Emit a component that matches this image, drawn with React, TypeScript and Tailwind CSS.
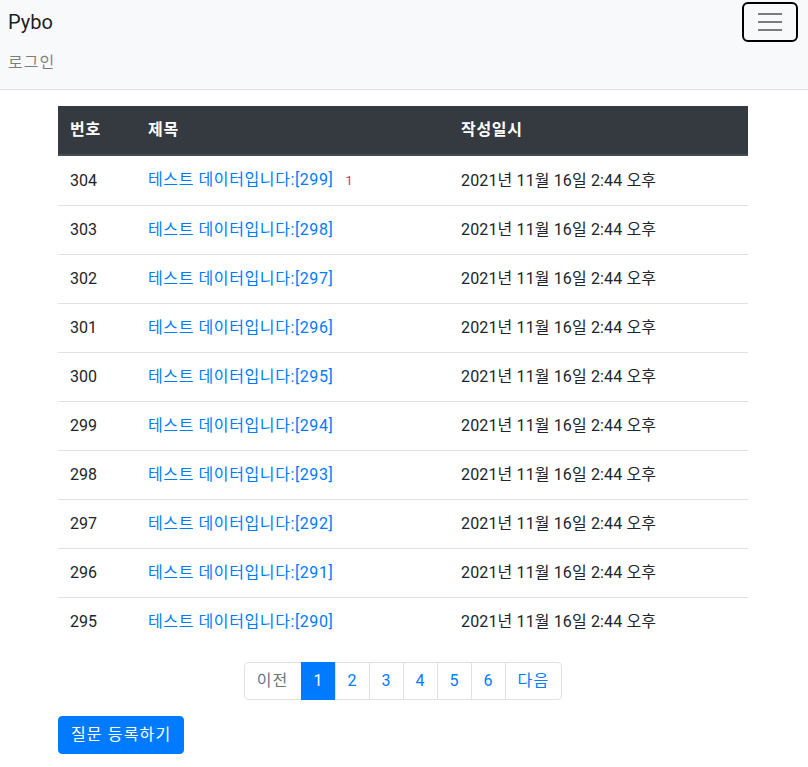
import React from "react";

const rows = [304, 303, 302, 301, 300, 299, 298, 297, 296, 295];

export default function App() {
  return (
    <div
      className="min-h-[767px] bg-white text-[#212529] text-[16px] leading-[24px]"
      style={{ fontFamily: 'Roboto, "Noto Sans CJK KR", sans-serif' }}
    >
      <nav className="h-[90px] bg-[#f8f9fa] border-b border-[#dee2e6] pl-[8px] pr-[10px] pt-[2px]">
        <div className="flex items-center justify-between h-[40px]">
          <span className="text-[20px] leading-[30px] text-[rgba(0,0,0,0.9)]">Pybo</span>
          <button className="w-[56px] h-[40px] border-2 border-black rounded-[6px] flex flex-col items-center justify-center gap-[6px]">
            <span className="block w-[24px] h-[2px] bg-[rgba(0,0,0,0.5)]"></span>
            <span className="block w-[24px] h-[2px] bg-[rgba(0,0,0,0.5)]"></span>
            <span className="block w-[24px] h-[2px] bg-[rgba(0,0,0,0.5)]"></span>
          </button>
        </div>
        <div className="mt-[3px] py-[6px] text-[rgba(0,0,0,0.5)] tracking-[1px]">로그인</div>
      </nav>
      <div className="w-[690px] ml-[58px] pt-[16px]">
        <table className="w-full border-collapse table-fixed">
          <colgroup>
            <col className="w-[78px]" />
            <col className="w-[313px]" />
            <col />
          </colgroup>
          <thead>
            <tr className="bg-[#343a40] text-white">
              <th className="text-left font-bold px-[12px] py-[12px] border-b-2 border-[#454d55] tracking-[0.7px]">번호</th>
              <th className="text-left font-bold px-[12px] py-[12px] border-b-2 border-[#454d55] tracking-[0.7px]">제목</th>
              <th className="text-left font-bold px-[12px] py-[12px] border-b-2 border-[#454d55] tracking-[0.7px]">작성일시</th>
            </tr>
          </thead>
          <tbody>
            {rows.map((n, i) => (
              <tr key={n} className="border-t border-[#dee2e6]">
                <td className="px-[12px] py-[12px]">{n}</td>
                <td className="px-[12px] py-[12px] whitespace-nowrap">
                  <span className="text-[#007bff] tracking-[0.6px]">테스트 데이터입니다:[{299 - i}]</span>
                  {i === 0 && <span className="text-[#dc3545] text-[12.8px] ml-[12px]">1</span>}
                </td>
                <td className="px-[12px] py-[12px] whitespace-nowrap tracking-[0.14px]">2021년 11월 16일 2:44 오후</td>
              </tr>
            ))}
          </tbody>
        </table>
        <div className="flex justify-center mt-[16px]">
          <ul className="flex">
            <li className="px-[12px] py-[6px] border border-[#dee2e6] rounded-l-[4px] text-[#6c757d] leading-[24px] tracking-[1.2px]">이전</li>
            <li className="px-[12px] py-[6px] border border-[#007bff] bg-[#007bff] text-white -ml-px">1</li>
            {[2, 3, 4, 5, 6].map((p) => (
              <li key={p} className="px-[12px] py-[6px] border border-[#dee2e6] text-[#007bff] -ml-px">{p}</li>
            ))}
            <li className="px-[12px] py-[6px] border border-[#dee2e6] rounded-r-[4px] text-[#007bff] -ml-px tracking-[1.2px]">다음</li>
          </ul>
        </div>
        <button className="mt-[16px] bg-[#007bff] text-white px-[12px] py-[6px] rounded-[4px] leading-[24px] border border-[#007bff] tracking-[1.15px]">
          질문 등록하기
        </button>
      </div>
    </div>
  );
}
